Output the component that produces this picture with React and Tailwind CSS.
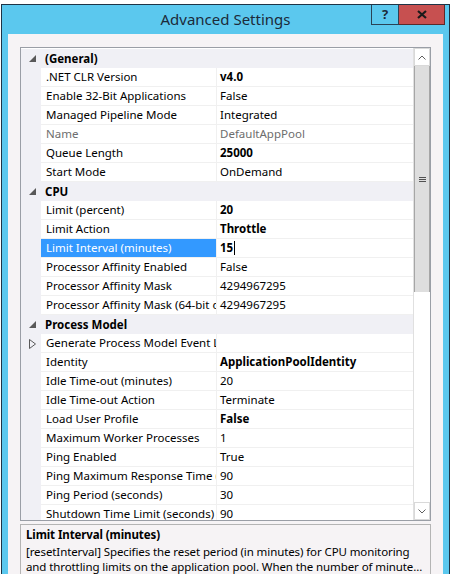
import React from "react";

const rows = [
  { cat: "(General)" },
  { name: ".NET CLR Version", value: "v4.0", bold: true },
  { name: "Enable 32-Bit Applications", value: "False" },
  { name: "Managed Pipeline Mode", value: "Integrated" },
  { name: "Name", value: "DefaultAppPool", gray: true },
  { name: "Queue Length", value: "25000", bold: true },
  { name: "Start Mode", value: "OnDemand" },
  { cat: "CPU" },
  { name: "Limit (percent)", value: "20", bold: true },
  { name: "Limit Action", value: "Throttle", bold: true },
  { name: "Limit Interval (minutes)", value: "15", bold: true, selected: true },
  { name: "Processor Affinity Enabled", value: "False" },
  { name: "Processor Affinity Mask", value: "4294967295" },
  { name: "Processor Affinity Mask (64-bit option)", value: "4294967295" },
  { cat: "Process Model" },
  { name: "Generate Process Model Event Log Entry", value: "", collapsed: true },
  { name: "Identity", value: "ApplicationPoolIdentity", bold: true },
  { name: "Idle Time-out (minutes)", value: "20" },
  { name: "Idle Time-out Action", value: "Terminate" },
  { name: "Load User Profile", value: "False", bold: true },
  { name: "Maximum Worker Processes", value: "1" },
  { name: "Ping Enabled", value: "True" },
  { name: "Ping Maximum Response Time (seconds)", value: "90" },
  { name: "Ping Period (seconds)", value: "30" },
  { name: "Shutdown Time Limit (seconds)", value: "90" },
];

const font = { fontFamily: '"Noto Sans", "Open Sans", sans-serif' };

function Expanded() {
  return (
    <svg width="7" height="7" viewBox="0 0 7 7">
      <polygon points="7,0 7,7 0,7" fill="#595959" />
    </svg>
  );
}

function Collapsed() {
  return (
    <svg width="7" height="10" viewBox="0 0 7 10">
      <polygon points="0.5,0.5 6.5,5 0.5,9.5" fill="none" stroke="#595959" strokeWidth="1" />
    </svg>
  );
}

function Row({ r }) {
  if (r.cat) {
    return (
      <div className="flex h-[19px] shrink-0 bg-[#f0f0f5]">
        <div className="w-[20px] flex items-center justify-center pl-[2px]">
          <Expanded />
        </div>
        <div className="flex-1 pl-[4px] flex items-center font-bold text-[11.5px] text-black">{r.cat}</div>
      </div>
    );
  }
  return (
    <div className="flex h-[19px] shrink-0">
      <div className="w-[20px] shrink-0 bg-[#f0f0f5] flex items-center justify-center pl-[2px]">
        {r.collapsed && <Collapsed />}
      </div>
      <div
        className={
          "w-[175px] shrink-0 border-b border-[#f0f0f0] flex items-center pl-[5px] whitespace-nowrap overflow-hidden text-[11.5px] " +
          (r.selected ? "bg-[#3399ff] text-white" : r.gray ? "text-[#6d6d6d]" : "text-black")
        }
      >
        {r.name}
      </div>
      <div
        className={
          "flex-1 border-b border-l border-[#f0f0f0] flex items-center pl-[3px] whitespace-nowrap overflow-hidden text-[11.5px] " +
          (r.bold ? "font-bold " : "") +
          (r.gray ? "text-[#6d6d6d]" : "text-black")
        }
      >
        {r.value}
        {r.selected && <span className="inline-block w-px h-[14px] bg-black ml-[1px]" />}
      </div>
    </div>
  );
}

function Scrollbar() {
  return (
    <div className="w-[17px] shrink-0 bg-[#f0f0f0] border-l border-[#e0e0e0] flex flex-col">
      <div className="h-[18px] bg-white border border-[#d9d9d9] flex items-center justify-center">
        <svg width="8" height="5" viewBox="0 0 8 5">
          <polyline points="0.5,4.5 4,1 7.5,4.5" fill="none" stroke="#606060" strokeWidth="1" />
        </svg>
      </div>
      <div className="h-[226px] bg-[#dedede] border-x border-[#a6a6a6] flex items-center justify-center">
        <div className="flex flex-col gap-[1px]">
          <div className="w-[7px] h-px bg-[#505050]" />
          <div className="w-[7px] h-px bg-[#505050]" />
          <div className="w-[7px] h-px bg-[#505050]" />
        </div>
      </div>
      <div className="flex-1 bg-white" />
      <div className="h-[18px] bg-white border border-[#d9d9d9] flex items-center justify-center">
        <svg width="8" height="5" viewBox="0 0 8 5">
          <polyline points="0.5,0.5 4,4 7.5,0.5" fill="none" stroke="#606060" strokeWidth="1" />
        </svg>
      </div>
    </div>
  );
}

export default function App() {
  return (
    <div className="w-[451px] h-[574px] overflow-hidden bg-white pt-[4px] pl-[1px]" style={font}>
      <div className="w-[449px] h-[600px] border border-[#1e3446] bg-[#5bc8ee] flex flex-col">
        <div className="relative h-[29px] shrink-0 flex items-center justify-center">
          <span className="text-[15px] text-[#1c2b3a] pb-[1px]">Advanced Settings</span>
          <div className="absolute right-[4px] top-0 flex">
            <div className="w-[28px] h-[20px] border border-[#2a4256] border-t-0 flex items-center justify-center text-[13px] font-bold text-[#1c2b3a]">
              ?
            </div>
            <div className="w-[46px] h-[20px] bg-[#c75050] border border-[#5c2a2a] border-t-0 border-l-0 flex items-center justify-center">
              <svg width="10" height="9" viewBox="0 0 10 9">
                <path d="M1 1 L9 8 M9 1 L1 8" stroke="#1a1a1a" strokeWidth="2.2" />
              </svg>
            </div>
          </div>
        </div>
        <div className="flex-1 mx-[6px] mb-[6px] bg-[#f6f3f5] pt-[13px] px-[12px] flex flex-col">
          <div className="h-[474px] shrink-0 border border-[#9a9ea6] bg-white flex overflow-hidden">
            <div className="flex-1 flex flex-col overflow-hidden pt-[1px]">
              {rows.map((r, i) => (
                <Row key={i} r={r} />
              ))}
            </div>
            <Scrollbar />
          </div>
          <div className="mt-[3px] h-[80px] border border-[#b4b4b4] bg-[#f6f3f5] px-[5px] pt-[2px] text-[11.5px] text-black leading-[15px] tracking-[-0.1px]">
            <div className="font-bold h-[17px]">Limit Interval (minutes)</div>
            <div className="whitespace-nowrap overflow-hidden">
              [resetInterval] Specifies the reset period (in minutes) for CPU monitoring
            </div>
            <div className="whitespace-nowrap overflow-hidden">
              and throttling limits on the application pool. When the number of minute...
            </div>
          </div>
        </div>
      </div>
    </div>
  );
}
